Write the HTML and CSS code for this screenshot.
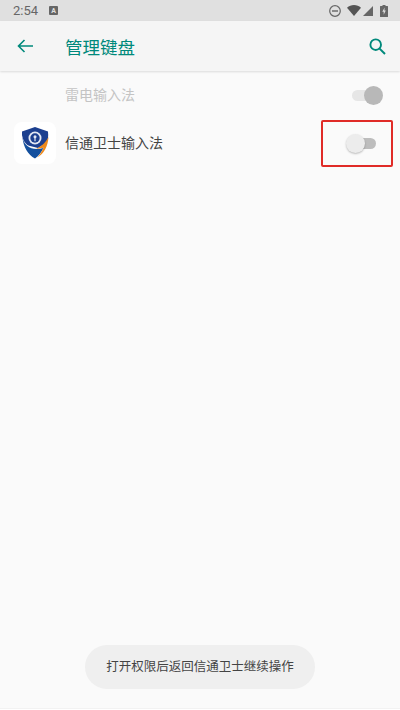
FILE: index.html
```html
<!DOCTYPE html>
<html lang="zh-CN">
<head>
    <meta charset="UTF-8">
    <meta name="viewport" content="width=device-width, initial-scale=1.0">
    <title>管理键盘</title>
    <link rel="stylesheet" href="styles.css">
</head>
<body>
    <div class="screen">
        <!-- Status Bar -->
        <div class="status-bar">
            <span class="time">2:54</span>
            <span class="a-badge">A</span>
            <div class="status-icons">
                <svg class="dnd-icon" width="12" height="12" viewBox="0 0 12 12"><circle cx="6" cy="6" r="5.300" fill="none" stroke="#666" stroke-width="1.200"/><rect x="3" y="5.300" width="6" height="1.400" fill="#666"/></svg>
                <svg class="wifi-icon" width="14" height="11" viewBox="0 0 14 11"><path d="M0 2.800C2 1 4.400 0 7 0s5 1 7 2.800L7 11z" fill="#555"/></svg>
                <svg class="signal-icon" width="10" height="10" viewBox="0 0 10 10"><path d="M10 0v10H0z" fill="#666"/></svg>
                <svg class="battery-icon" width="8" height="12" viewBox="0 0 8 12"><path d="M2.500 0h3v1H7.500a.5.500 0 0 1 .5.500V11.500a.5.500 0 0 1-.5.500H.5a.5.500 0 0 1-.5-.500V1.500A.5.500 0 0 1 .5 1h2z" fill="#666"/><path d="M4.600 2.500 2.300 6.800h1.400V9.800L5.800 5.600H4.400z" fill="#ddd"/></svg>
            </div>
        </div>

        <!-- Toolbar -->
        <div class="toolbar">
            <svg class="back-icon" width="16" height="14" viewBox="0 0 16 14"><path d="M16 7H1.500M7.500 1 1.500 7l6 6" fill="none" stroke="#00897b" stroke-width="1.600"/></svg>
            <h1>管理键盘</h1>
            <svg class="search-icon" width="17" height="17" viewBox="0 0 17 17"><circle cx="6.700" cy="6.700" r="5.300" fill="none" stroke="#00897b" stroke-width="1.900"/><path d="M10.600 10.600 16 16" stroke="#00897b" stroke-width="2"/></svg>
        </div>

        <!-- Keyboard List -->
        <div class="keyboard-list">
            <div class="keyboard-row disabled">
                <div class="app-icon-space"></div>
                <span class="keyboard-name">雷电输入法</span>
                <div class="switch-box">
                    <div class="switch on"><span class="track"></span><span class="thumb"></span></div>
                </div>
            </div>
            <div class="keyboard-row">
                <div class="app-icon">
                    <svg width="28" height="32" viewBox="0 0 28 32">
                        <path d="M14 0 L27 4.500 C27.500 9 27 13 25.500 16 L17 21 L5 18 C2 14 .5 9 1 4.500z" fill="#1c3f8f"/>
                        <path d="M.8 8 C2.500 17 9 21.500 18 22 L13 24.500 C7 22 2 16 .8 8z" fill="#f3f3f6"/>
                        <path d="M1.500 11 C4 20 11 24 22.500 21 C20 26 17 29.500 14 31.500 C7 28 2.500 20 1.500 11z" fill="#14509e"/>
                        <path d="M27.500 10 C27 19 23 26.500 16.500 30.500 C19.500 27 21 24 22.500 20.800 L15 22 C20 19.500 25 15.500 27.500 10z" fill="#ee8a1d"/>
                        <circle cx="14" cy="11" r="6.500" fill="#e3e8f4"/>
                        <circle cx="14" cy="11" r="4.700" fill="#1c3f8f"/>
                        <circle cx="14" cy="9.800" r="1.500" fill="#e3e8f4"/>
                        <path d="M14 10v4.200" stroke="#e3e8f4" stroke-width="1.200"/>
                    </svg>
                </div>
                <span class="keyboard-name">信通卫士输入法</span>
                <div class="switch-box highlighted">
                    <div class="switch off"><span class="track"></span><span class="thumb"></span></div>
                </div>
            </div>
        </div>

        <div class="bottom-edge"></div>

        <!-- Toast -->
        <div class="toast">打开权限后返回信通卫士继续操作</div>
    </div>
</body>
</html>
```

FILE: styles.css
```css
/* General Styles */
* {
    margin: 0;
    padding: 0;
    box-sizing: border-box;
}

body {
    font-family: Roboto, "Noto Sans CJK SC", sans-serif;
    background-color: #fafafa;
}

.screen {
    position: relative;
    display: flex;
    flex-direction: column;
    width: 400px;
    height: 710px;
    overflow: hidden;
    background-color: #fafafa;
}

/* Status Bar */
.status-bar {
    display: flex;
    align-items: center;
    height: 21px;
    padding: 0 12px 0 13px;
    background-color: #e0e0e0;
    color: #666;
}

.time {
    font-size: 13px;
}

.a-badge {
    display: flex;
    align-items: center;
    justify-content: center;
    width: 9px;
    height: 9px;
    margin-left: 11px;
    border-radius: 1px;
    background-color: #666;
    color: #e0e0e0;
    font-size: 7px;
    font-weight: bold;
}

.status-icons {
    display: flex;
    align-items: center;
    margin-left: auto;
}

.wifi-icon {
    margin-left: 6px;
}

.signal-icon {
    margin-left: 2px;
}

.battery-icon {
    margin-left: 7px;
}

/* Toolbar */
.toolbar {
    display: flex;
    align-items: center;
    height: 50px;
    padding: 0 14px 0 17px;
    background-color: #f5f5f5;
    box-shadow: 0 1px 2px rgba(0, 0, 0, 0.12);
}

.toolbar h1 {
    margin-left: 32px;
    font-size: 17.500px;
    font-weight: 400;
    color: #00897b;
}

.search-icon {
    margin-left: auto;
}

/* Keyboard List */
.keyboard-list {
    flex: 1;
}

.keyboard-row {
    display: flex;
    align-items: center;
    height: 48px;
    padding: 0 7px 0 14px;
}

.app-icon,
.app-icon-space {
    flex: none;
    width: 42px;
    height: 42px;
    margin-right: 9px;
}

.app-icon {
    display: flex;
    align-items: center;
    justify-content: center;
    border-radius: 8px;
    background-color: white;
}

.keyboard-name {
    margin-bottom: 2px;
    font-size: 14px;
    color: #444;
}

.disabled .keyboard-name {
    color: #c4c4c4;
}

/* Switches */
.switch-box {
    display: flex;
    align-items: center;
    justify-content: flex-end;
    width: 72px;
    height: 47px;
    margin-left: auto;
    padding-right: 9px;
    border: 2px solid transparent;
    border-radius: 2px;
}

.switch-box.highlighted {
    padding-right: 14px;
    border-color: #e02b27;
}

.switch {
    position: relative;
    width: 30px;
    height: 19px;
}

.track {
    position: absolute;
    top: 4px;
    left: 0;
    width: 29px;
    height: 11px;
    border-radius: 6px;
}

.thumb {
    position: absolute;
    top: 0;
    width: 19px;
    height: 19px;
    border-radius: 50%;
}

.switch.on .track {
    background-color: #e6e6e6;
}

.switch.on .thumb {
    right: -1px;
    background-color: #b8b8b8;
}

.switch.off .track {
    background-color: #bdbdbd;
}

.switch.off .thumb {
    left: -1px;
    background-color: #ececec;
    box-shadow: 0 1px 2px rgba(0, 0, 0, 0.25);
}

/* Bottom Edge */
.bottom-edge {
    height: 2px;
    background-color: white;
    border-top: 1px solid #f2f2f2;
}

/* Toast */
.toast {
    position: absolute;
    left: 85px;
    bottom: 21px;
    width: 230px;
    height: 44px;
    border-radius: 22px;
    background-color: #efefef;
    color: #444;
    font-size: 12.500px;
    line-height: 44px;
    text-align: center;
}
```
